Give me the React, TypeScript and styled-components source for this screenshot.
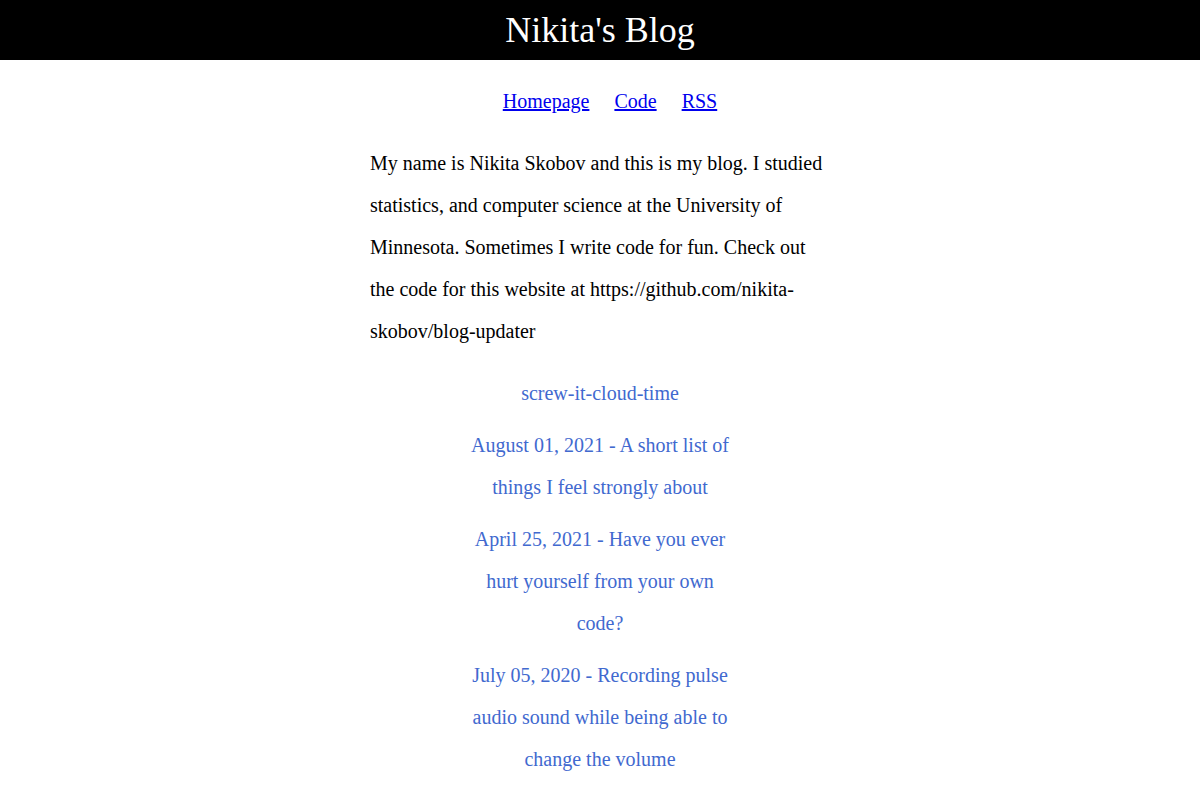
import React from 'react';
import styled, { createGlobalStyle } from 'styled-components';

const GlobalStyle = createGlobalStyle`
  body {
    margin: 0;
    background: #fff;
    font-family: "Liberation Serif", "Times New Roman", serif;
    color: #000;
  }
`;

const Header = styled.header`
  height: 60px;
  background: #000;
  display: flex;
  align-items: center;
  justify-content: center;
`;

const Title = styled.h1`
  margin: 0;
  color: #fff;
  font-size: 36px;
  font-weight: normal;
  line-height: 60px;
`;

const Nav = styled.nav`
  display: flex;
  justify-content: center;
  gap: 25px;
  padding: 20px 0 0 20px;
  line-height: 42px;
  font-size: 20px;
`;

const NavLink = styled.a`
  color: #0000ee;
  text-decoration: underline;
`;

const Main = styled.main`
  display: flex;
  flex-direction: column;
  align-items: center;
  padding-top: 20px;
`;

const Intro = styled.p`
  width: 460px;
  margin: 0 0 20px;
  font-size: 20px;
  line-height: 42px;
`;

const PostList = styled.ul`
  list-style: none;
  margin: 0;
  padding: 0;
  width: 266px;
  display: flex;
  flex-direction: column;
  gap: 10px;
  text-align: center;
`;

const PostLink = styled.a`
  display: block;
  color: #4169cf;
  text-decoration: none;
  font-size: 20px;
  line-height: 42px;
`;

const posts = [
  'screw-it-cloud-time',
  'August 01, 2021 - A short list of things I feel strongly about',
  'April 25, 2021 - Have you ever hurt yourself from your own code?',
  'July 05, 2020 - Recording pulse audio sound while being able to change the volume',
];

export default function App() {
  return (
    <>
      <GlobalStyle />
      <Header>
        <Title>Nikita's Blog</Title>
      </Header>
      <Nav>
        <NavLink href="#">Homepage</NavLink>
        <NavLink href="#">Code</NavLink>
        <NavLink href="#">RSS</NavLink>
      </Nav>
      <Main>
        <Intro>
          My name is Nikita Skobov and this is my blog. I studied statistics, and computer
          science at the University of Minnesota. Sometimes I write code for fun. Check out the
          code for this website at https://github.com/nikita-skobov/blog-updater
        </Intro>
        <PostList>
          {posts.map((p) => (
            <li key={p}>
              <PostLink href="#">{p}</PostLink>
            </li>
          ))}
        </PostList>
      </Main>
    </>
  );
}
